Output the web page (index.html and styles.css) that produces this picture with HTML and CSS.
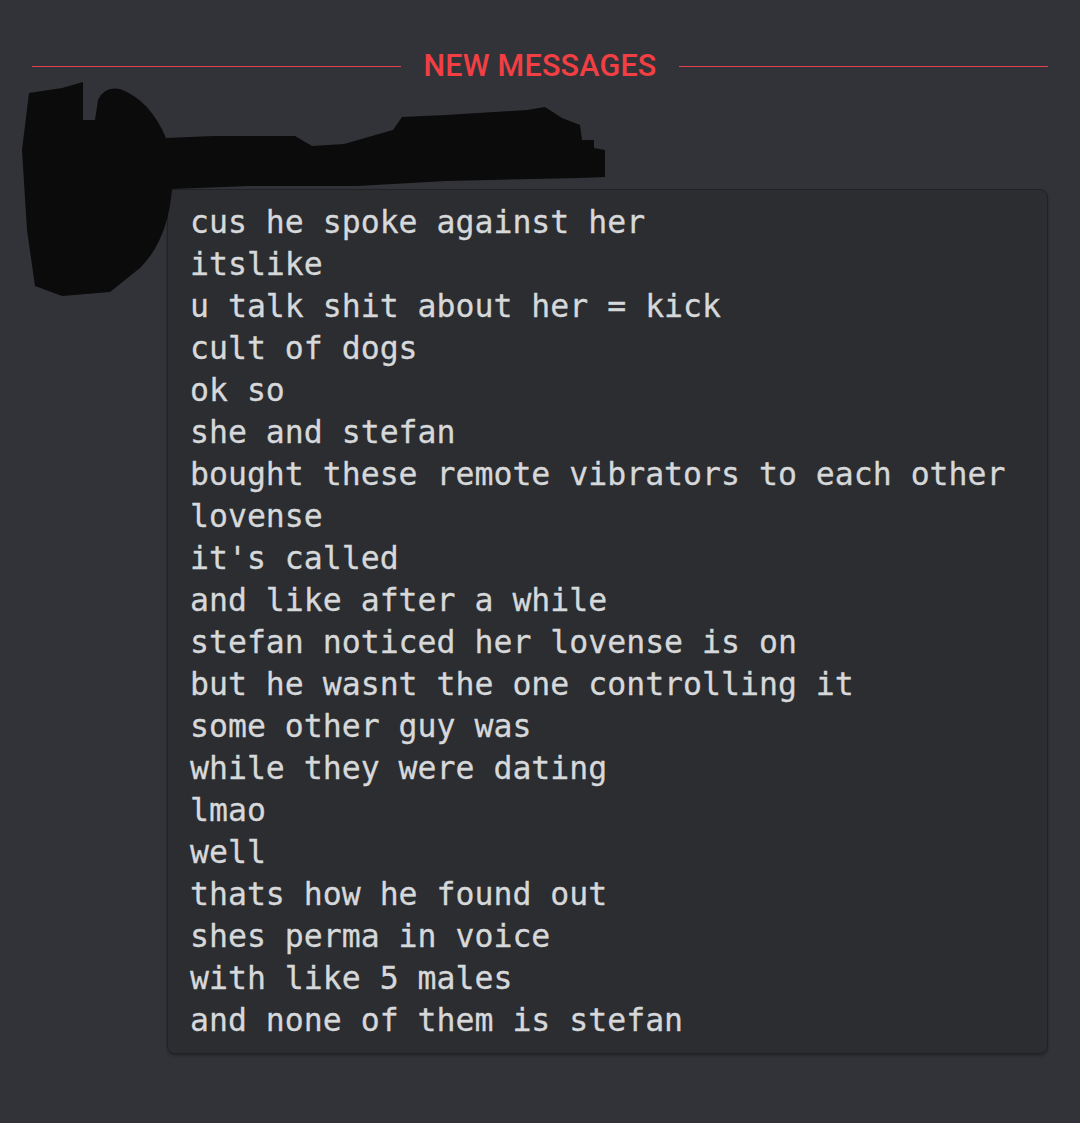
FILE: index.html
```html
<!DOCTYPE html>
<html lang="en">
<head>
<meta charset="utf-8">
<title>Messages</title>
<link rel="stylesheet" href="styles.css">
</head>
<body>
<div class="page">
  <div class="divider">
    <span class="divider-line"></span>
    <span class="divider-label">NEW MESSAGES</span>
    <span class="divider-line"></span>
  </div>
  <div class="message">
    <svg class="redaction" viewBox="0 0 620 300" width="620" height="300" aria-hidden="true">
      <path fill="#0b0b0b" d="M29,93 L62,88 L83,82 L83,120 L95,120 L98,100 Q104,86 120,89 Q150,100 166,138 L214,136 L295,136 L312,146 L344,144 L393,130 L402,117 L446,115 L527,110 L545,107 L562,118 L580,125 L582,140 L594,140 L594,148 L605,150 L605,177 L580,178 L446,181 L357,186 L250,186 L172,189 Q168,240 140,268 L110,292 L62,296 L35,286 L27,230 L22,150 Z"/>
    </svg>
    <pre class="codeblock">cus he spoke against her
itslike
u talk shit about her = kick
cult of dogs
ok so
she and stefan
bought these remote vibrators to each other
lovense
it's called
and like after a while
stefan noticed her lovense is on
but he wasnt the one controlling it
some other guy was
while they were dating
lmao
well
thats how he found out
shes perma in voice
with like 5 males
and none of them is stefan</pre>
  </div>
</div>
</body>
</html>
```

FILE: styles.css
```css
html, body {
  margin: 0;
  padding: 0;
  background: #313338;
}

.page {
  position: relative;
  width: 1080px;
  height: 1123px;
  padding-top: 50px;
  box-sizing: border-box;
  overflow: hidden;
}

.divider {
  display: flex;
  align-items: center;
  gap: 22px;
  margin: 0 32px;
  height: 32px;
}

.divider-line {
  flex: 1;
  height: 1px;
  background: #e0414a;
}

.divider-label {
  font-family: Roboto, "Noto Sans", sans-serif;
  font-weight: 500;
  font-size: 30.5px;
  line-height: 32px;
  color: #f23f43;
  letter-spacing: 0.2px;
}

.message {
  padding-left: 167px;
  padding-right: 32px;
  margin-top: 107px;
}

.redaction {
  position: absolute;
  left: 0;
  top: 0;
}

.codeblock {
  margin: 0;
  background: #2b2d31;
  border: 1px solid #202225;
  border-radius: 8px;
  padding: 11px 22px 12px 22px;
  font-family: "DejaVu Sans Mono", "Liberation Mono", monospace;
  font-size: 31.5px;
  line-height: 42px;
  color: #d6d8da;
  -webkit-text-stroke: 0.3px #d6d8da;
  white-space: pre;
  box-shadow: 0 2px 3px rgba(0, 0, 0, 0.25);
}
```
